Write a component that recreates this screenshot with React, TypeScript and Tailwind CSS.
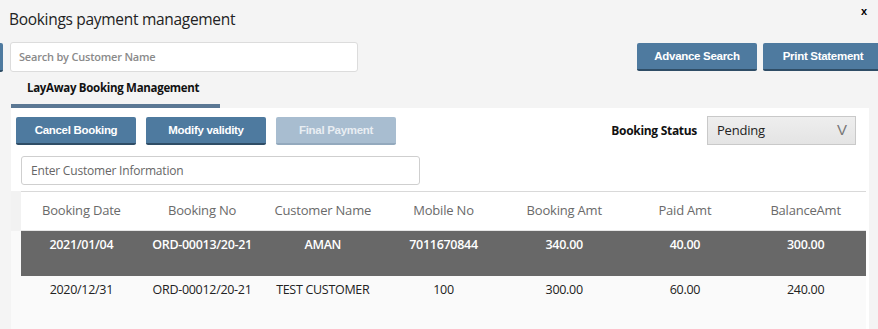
import React from "react";

const columns = ["Booking Date", "Booking No", "Customer Name", "Mobile No", "Booking Amt", "Paid Amt", "BalanceAmt"];

const bookings = [
  { date: "2021/01/04", no: "ORD-00013/20-21", name: "AMAN", mobile: "7011670844", amt: "340.00", paid: "40.00", balance: "300.00" },
  { date: "2020/12/31", no: "ORD-00012/20-21", name: "TEST CUSTOMER", mobile: "100", amt: "300.00", paid: "60.00", balance: "240.00" },
];

function BlueButton({ label, disabled = false }: { label: string; disabled?: boolean }) {
  return (
    <button
      className={`w-[120px] h-[28px] pt-[2px] rounded-[2px] border-b-2 text-[11.5px] font-bold tracking-[-0.3px] font-['Liberation_Sans',sans-serif] ${
        disabled ? "bg-[#a8bdd0] border-[#93a9bd] text-[#e9eef3]" : "bg-[#4e7a9f] border-[#2f4d66] text-white"
      }`}
    >
      {label}
    </button>
  );
}

export default function App() {
  return (
    <div className="w-[878px] h-[329px] overflow-hidden bg-[#f4f4f4] flex flex-col font-['Open_Sans',sans-serif] text-[#222]">
      {/* Header */}
      <div className="h-[42px] flex items-start justify-between pl-[9px] pr-[11px]">
        <h1 className="pt-[8px] text-[15.5px] leading-[22px] tracking-[-0.3px]">Bookings payment management</h1>
        <button className="pt-[3px] text-[11px] font-bold text-black font-['Liberation_Sans',sans-serif]">x</button>
      </div>

      {/* Search row */}
      <div className="h-[30px] flex items-center">
        <div className="w-[3px] h-[29px] bg-[#4e7a9f] border-b-2 border-[#2f4d66] rounded-r-[2px]" />
        <div className="ml-[7px] w-[348px] h-[30px] bg-white border border-[#dcdcdc] rounded-[3px] flex items-center px-[8px] text-[11px] font-semibold text-[#8a8a8a] tracking-[-0.2px]">
          Search by Customer Name
        </div>
        <div className="ml-auto flex gap-[6px] -mr-[5px]">
          <BlueButton label="Advance Search" />
          <BlueButton label="Print Statement" />
        </div>
      </div>

      {/* Tab */}
      <div className="h-[36px] flex">
        <div className="ml-[11px] w-[209px] border-b-4 border-[#5b7894] flex items-center pl-[16px] text-[11.5px] font-bold text-[#111] tracking-[-0.3px]">
          LayAway Booking Management
        </div>
      </div>

      {/* Panel */}
      <div className="ml-[11px] w-[858px] flex-1 bg-white flex flex-col pt-[8px]">
        <div className="flex items-end pl-[5px] pr-[13px]">
          <div className="flex gap-[10px]">
            <BlueButton label="Cancel Booking" />
            <BlueButton label="Modify validity" />
            <BlueButton label="Final Payment" disabled />
          </div>
          <div className="ml-auto flex items-center gap-[10px]">
            <span className="text-[12px] font-bold text-[#111] tracking-[-0.3px]">Booking Status</span>
            <div className="w-[149px] h-[29px] border border-[#c9c9c9] bg-gradient-to-b from-[#eeeeee] to-[#e4e4e4] flex items-center justify-between pl-[9px] pr-[8px]">
              <span className="text-[13px] tracking-[-0.2px]">Pending</span>
              <span className="text-[15px] text-[#777] font-['Liberation_Sans',sans-serif]">V</span>
            </div>
          </div>
        </div>

        <div className="ml-[10px] mt-[11px] w-[399px] h-[29px] border border-[#cfcfcf] rounded-[3px] flex items-center px-[9px] text-[12px] text-[#666] tracking-[-0.2px]">
          Enter Customer Information
        </div>

        {/* Table */}
        <div className="mt-[6px] mr-[3px] flex-1 flex flex-col bg-[#fafafa]">
          <div className="flex h-[40px]">
            <div className="w-[10px] bg-[#f2f2f2]" />
            <div className="flex-1 grid grid-cols-7 bg-white border-t border-b border-[#d9d9d9] border-b-[#e6e6e6]">
              {columns.map((c) => (
                <div key={c} className="flex items-center justify-center text-[13px] text-[#6a6a6a] tracking-[-0.2px]">
                  {c}
                </div>
              ))}
            </div>
          </div>
          {bookings.map((b, i) => (
            <div key={b.no} className="flex h-[45px]">
              <div className="w-[10px]" />
              <div
                className={`flex-1 grid grid-cols-7 pt-[4px] text-[12.5px] leading-[20px] tracking-[-0.3px] ${
                  i === 0 ? "bg-[#686868] text-white font-semibold" : "text-[#222]"
                }`}
              >
                {[b.date, b.no, b.name, b.mobile, b.amt, b.paid, b.balance].map((v, j) => (
                  <div key={j} className="text-center">
                    {v}
                  </div>
                ))}
              </div>
            </div>
          ))}
        </div>
      </div>
    </div>
  );
}
